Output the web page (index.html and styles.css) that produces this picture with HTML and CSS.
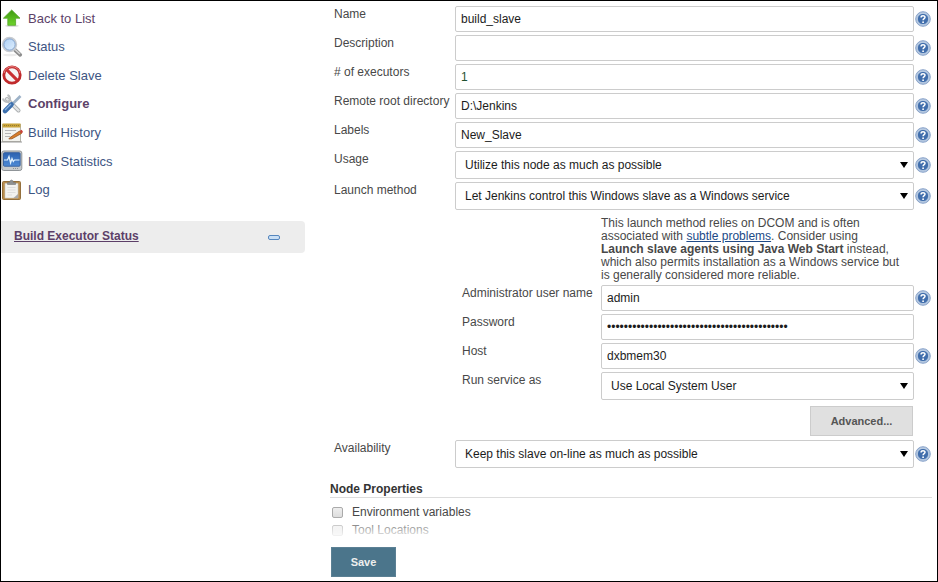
FILE: index.html
```html
<!DOCTYPE html>
<html lang="en">
<head>
<meta charset="utf-8">
<meta name="viewport" content="width=device-width, initial-scale=1">
<title>build_slave Configuration</title>
<link rel="stylesheet" href="styles.css">
</head>
<body>
<svg class="defs" aria-hidden="true">
  <defs>
    <linearGradient id="green" x1="0" y1="0" x2="0" y2="1"><stop offset="0" stop-color="#3f9a12"/><stop offset="1" stop-color="#6fd42c"/></linearGradient>
    <linearGradient id="lens" x1="0" y1="0" x2="1" y2="1"><stop offset="0" stop-color="#a9ccf2"/><stop offset="1" stop-color="#e4f2ff"/></linearGradient>
    <linearGradient id="screen" x1="0" y1="0" x2="0" y2="1"><stop offset="0" stop-color="#2c62b0"/><stop offset="1" stop-color="#4d8ad6"/></linearGradient>
    <symbol id="help" viewBox="0 0 16 16">
      <circle cx="8" cy="8" r="7.3" fill="#b4c7e0" stroke="#8aa4ca"/>
      <circle cx="8" cy="8" r="5.6" fill="#416eac" stroke="#d4e0ef" stroke-width=".6"/>
      <path d="M6.100 6.400C6.100 4.200 10 4.200 10 6.300C10 7.700 8.100 7.600 8.100 9.200" fill="none" stroke="#fff" stroke-width="1.500"/>
      <circle cx="8.1" cy="11.2" r=".9" fill="#fff"/>
    </symbol>
  </defs>
</svg>
<div class="page">
  <aside class="side">
    <nav class="tasks">
      <a class="task visited" href="#">
        <svg class="icon" viewBox="0 0 22 22"><ellipse cx="11" cy="18.800" rx="7" ry="1.200" fill="#ddd"/><path d="M10.700 3L19 11.200H14.600V18.300H6.800V11.200H2.400Z" fill="url(#green)" stroke="#55a52b" stroke-width=".8"/></svg>
        Back to List</a>
      <a class="task" href="#">
        <svg class="icon" viewBox="0 0 22 22"><ellipse cx="9" cy="19" rx="7" ry="1.300" fill="#ececec"/><path d="M14 14L19.200 18.800" stroke="#8d8d8d" stroke-width="3.800" stroke-linecap="round"/><path d="M14 13.500L19 18" stroke="#d5d5d5" stroke-width="1.500"/><circle cx="8.500" cy="8.500" r="6.700" fill="url(#lens)" stroke="#c6cad0" stroke-width="2"/><circle cx="8.500" cy="8.500" r="5.600" fill="none" stroke="#7399cb" stroke-width=".8"/></svg>
        Status</a>
      <a class="task" href="#">
        <svg class="icon" viewBox="0 0 22 22"><circle cx="11" cy="11" r="8.200" fill="#f6f3f3" stroke="#c02a2c" stroke-width="2.800"/><path d="M5.600 5.600L16.400 16.400" stroke="#c92f32" stroke-width="3"/><path d="M3 9A8.200 8.200 0 0 1 19 9" fill="none" stroke="#e88080" stroke-width="1"/></svg>
        Delete Slave</a>
      <a class="task visited current" href="#">
        <svg class="icon" viewBox="0 0 22 22"><path d="M6 6L17.500 17.500" stroke="#a9acae" stroke-width="4" stroke-linecap="round"/><path d="M6 6L17.500 17.500" stroke="#e3e5e6" stroke-width="2.400" stroke-linecap="round"/><path d="M2 5.500A4 4 0 0 0 8.300 8A4 4 0 0 0 6.500 2" fill="none" stroke="#bbbec0" stroke-width="2.200"/><path d="M19.500 3L11.500 11" stroke="#9db2c8" stroke-width="2.600"/><path d="M10.500 11.500L4 18" stroke="#3d70ae" stroke-width="4.600" stroke-linecap="round"/><path d="M10 11L4 17" stroke="#86afdf" stroke-width="1.300"/></svg>
        Configure</a>
      <a class="task" href="#">
        <svg class="icon" viewBox="0 0 22 22"><rect x="1.500" y="2.500" width="18" height="17" fill="#f3f3ee" stroke="#b5b4aa"/><rect x="1.500" y="1.500" width="18" height="4" fill="#c9a43b"/><path d="M3 3.500H19" stroke="#947a30" stroke-dasharray="1 1"/><path d="M4 8.500H15M4 11.500H10M4 14.500H9" stroke="#b5b5b5"/><path d="M0 20H21" stroke="#999"/><path d="M9 15.500L18.500 9L20.500 11.500L11 16.800L7.800 17Z" fill="#d87d2b" stroke="#8c4d18" stroke-width=".7"/><path d="M18.500 9L20.800 7.800L22 10L20.500 11.500Z" fill="#c8423a"/></svg>
        Build History</a>
      <a class="task" href="#">
        <svg class="icon" viewBox="0 0 22 22"><rect x=".8" y="1" width="20" height="19.500" rx="2" fill="#c7cacc" stroke="#8f9498"/><rect x="2.500" y="2.700" width="16.600" height="13.500" rx="1" fill="url(#screen)" stroke="#3a63a0"/><path d="M3 10H6.500L8 6.500L9.600 13L11 8.500L12.300 11.500L13.500 10H18.500" fill="none" stroke="#e3f3ff" stroke-width="1.200"/><path d="M12 18.500H18" stroke="#8e9497" stroke-dasharray="1 1"/></svg>
        Load Statistics</a>
      <a class="task" href="#">
        <svg class="icon" viewBox="0 0 22 22"><rect x="1.500" y="2.500" width="18" height="18" rx="1" fill="#b98d4d" stroke="#94703d"/><path d="M4 4.500H17V19H4Z" fill="#f2f2f0" stroke="#c9c9c4" stroke-width=".6"/><path d="M6.500 8.500H14.500M6.500 11H14.500M6.500 13.500H14.500M6.500 16H11" stroke="#ddd"/><path d="M12.500 19L17 15V19Z" fill="#aaa"/><path d="M6.500 5.500V3.500H8.500Q9 1 10.500 1Q12 1 12.500 3.500H14.500V5.500Z" fill="#8d9092" stroke="#777" stroke-width=".6"/></svg>
        Log</a>
    </nav>
    <section class="pane">
      <a class="pane-title" href="#">Build Executor Status</a>
      <button class="collapse" type="button" aria-label="Collapse"><span class="minus"></span></button>
    </section>
  </aside>

  <form class="config">
    <div class="row">
      <label for="name">Name</label>
      <input class="field" id="name" type="text" value="build_slave">
      <a class="help" href="#" aria-label="Help"><svg><use href="#help"/></svg></a>
    </div>
    <div class="row">
      <label for="description">Description</label>
      <input class="field" id="description" type="text">
      <a class="help" href="#" aria-label="Help"><svg><use href="#help"/></svg></a>
    </div>
    <div class="row">
      <label for="executors"># of executors</label>
      <input class="field number" id="executors" type="text" value="1">
      <a class="help" href="#" aria-label="Help"><svg><use href="#help"/></svg></a>
    </div>
    <div class="row">
      <label for="root">Remote root directory</label>
      <input class="field" id="root" type="text" value="D:\Jenkins">
      <a class="help" href="#" aria-label="Help"><svg><use href="#help"/></svg></a>
    </div>
    <div class="row">
      <label for="labels">Labels</label>
      <input class="field" id="labels" type="text" value="New_Slave">
      <a class="help" href="#" aria-label="Help"><svg><use href="#help"/></svg></a>
    </div>
    <div class="row">
      <label for="usage">Usage</label>
      <div class="picker"><select class="field" id="usage"><option>Utilize this node as much as possible</option></select></div>
      <a class="help" href="#" aria-label="Help"><svg><use href="#help"/></svg></a>
    </div>
    <div class="row">
      <label for="launch">Launch method</label>
      <div class="picker"><select class="field" id="launch"><option>Let Jenkins control this Windows slave as a Windows service</option></select></div>
      <a class="help" href="#" aria-label="Help"><svg><use href="#help"/></svg></a>
    </div>

    <div class="nested">
      <p class="note">This launch method relies on DCOM and is often<br>associated with <a href="#">subtle problems</a>. Consider using<br><b>Launch slave agents using Java Web Start</b> instead,<br>which also permits installation as a Windows service but<br>is generally considered more reliable.</p>
      <div class="row">
        <label for="admin">Administrator user name</label>
        <input class="field" id="admin" type="text" value="admin">
        <a class="help" href="#" aria-label="Help"><svg><use href="#help"/></svg></a>
      </div>
      <div class="row">
        <label for="password">Password</label>
        <input class="field" id="password" type="password" value="0000000000000000000000000000000000000000000">
      </div>
      <div class="row">
        <label for="host">Host</label>
        <input class="field" id="host" type="text" value="dxbmem30">
        <a class="help" href="#" aria-label="Help"><svg><use href="#help"/></svg></a>
      </div>
      <div class="row">
        <label for="runas">Run service as</label>
        <div class="picker"><select class="field" id="runas"><option>Use Local System User</option></select></div>
      </div>
      <button class="advanced" type="button">Advanced...</button>
    </div>

    <div class="row">
      <label for="availability">Availability</label>
      <div class="picker"><select class="field" id="availability"><option>Keep this slave on-line as much as possible</option></select></div>
      <a class="help" href="#" aria-label="Help"><svg><use href="#help"/></svg></a>
    </div>

    <h2 class="heading">Node Properties</h2>
    <label class="check"><input type="checkbox"> Environment variables</label>
    <label class="check"><input type="checkbox"> Tool Locations</label>
    <div class="bottom"><button class="save" type="submit">Save</button></div>
  </form>
</div>
</body>
</html>
```
FILE: styles.css
```css
* {
  box-sizing: border-box;
}

body {
  margin: 0;
  background: #fff;
  color: #484848;
  font-family: "Liberation Sans", Arial, sans-serif;
  font-size: 12px;
}

input,
select,
button {
  margin: 0;
  font: inherit;
}

.defs {
  position: absolute;
  width: 0;
  height: 0;
}

.page {
  display: grid;
  grid-template-columns: 304px minmax(0, 1fr);
  column-gap: 25px;
  min-height: 100vh;
  border: 1px solid #000;
}

/* Side panel */
.tasks {
  display: grid;
  grid-auto-rows: 1fr;
  height: 200px;
  margin-top: 3px;
}

.task {
  display: flex;
  align-items: center;
  gap: 5px;
  color: #3d5583;
  font-size: 13px;
  text-decoration: none;
}

.visited {
  color: #5c4268;
}

.current {
  font-weight: bold;
}

.icon {
  width: 22px;
  height: 22px;
}

.pane {
  display: flex;
  align-items: center;
  justify-content: space-between;
  height: 32px;
  margin-top: 17px;
  padding: 0 25px 2px 13px;
  border-radius: 0 4px 4px 0;
  background: #ededed;
}

.pane-title {
  color: #5c3f68;
  font-weight: bold;
}

.collapse {
  padding: 3px 0 0;
  border: 0;
  background: none;
}

.minus {
  display: block;
  width: 12px;
  height: 5px;
  border: 1px solid #5686bd;
  border-radius: 2px;
  background: #c9dff5;
}

/* Form */
.config {
  padding: 5px 5px 0 0;
}

.row {
  display: grid;
  grid-template-columns: 121px minmax(0, 1fr) 18px;
  align-items: center;
  margin-bottom: 3px;
  padding-left: 4px;
}

.row > label {
  align-self: start;
  line-height: 16px;
  white-space: nowrap;
}

.field {
  display: block;
  width: 100%;
  height: 26px;
  padding: 0 5px;
  border: 1px solid #ccc;
  border-radius: 2px;
  background: #fff;
  color: #1c1c1c;
  outline: 0;
}

.number {
  color: #1f5130;
}

.picker {
  position: relative;
}

.picker .field {
  height: 28px;
  padding: 0 9px;
  appearance: none;
}

.picker::after {
  content: "";
  position: absolute;
  top: 11px;
  right: 6px;
  border: solid transparent;
  border-width: 6px 4px 0;
  border-top-color: #000;
  pointer-events: none;
}

.help {
  display: block;
  width: 16px;
  height: 16px;
  margin-left: 1px;
}

.help svg {
  display: block;
  width: 16px;
  height: 16px;
}

.nested {
  margin-left: 125px;
  padding-top: 4px;
}

.nested .row {
  grid-template-columns: 139px minmax(0, 1fr) 18px;
  padding-left: 7px;
}

.note {
  margin: 0 0 3px 146px;
  line-height: 13px;
}

.note a {
  color: #204a87;
}

.advanced {
  display: block;
  width: 103px;
  height: 30px;
  margin: 6px 19px 4px auto;
  border: 1px solid #ccc;
  background: #e0e0e0;
  color: #555;
  font-size: 11px;
  font-weight: bold;
}

.heading {
  margin: 13px 0 5px;
  border-bottom: 1px solid #ddd;
  color: #333;
  font-size: 12px;
  line-height: 16px;
}

.check {
  display: flex;
  align-items: center;
  gap: 9px;
  height: 18px;
  padding-left: 2px;
}

.check input {
  width: 11px;
  height: 11px;
  border: 1px solid #aaa;
  border-radius: 2px;
  background: linear-gradient(#eee, #ddd);
  appearance: none;
}

.bottom {
  position: sticky;
  bottom: 1px;
  padding: 8px 0 3px 1px;
  background: #fff;
}

.bottom::before {
  content: "";
  position: absolute;
  right: 0;
  bottom: 100%;
  left: 0;
  height: 22px;
  background: linear-gradient(rgb(255 255 255 / 0), #fff);
}

.save {
  display: block;
  width: 65px;
  height: 30px;
  border: 1px solid #5b8094;
  background: #4b758b;
  color: #eee;
  font-size: 11px;
  font-weight: bold;
}
```
